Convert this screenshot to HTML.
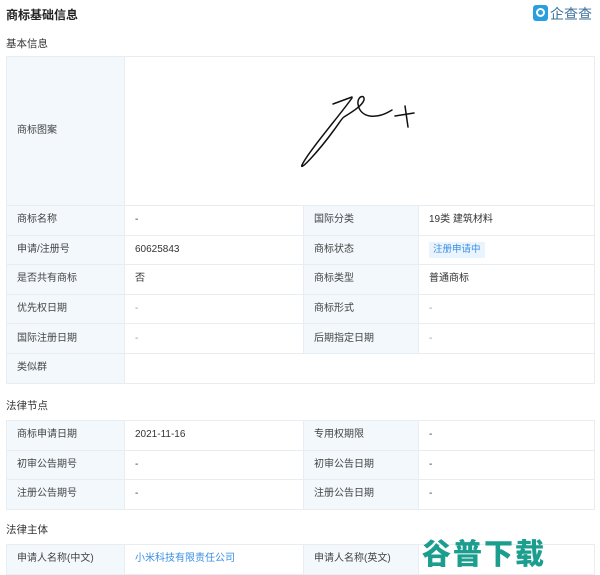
<!DOCTYPE html>
<html><head><meta charset="utf-8"><style>
*{margin:0;padding:0;box-sizing:border-box}
body{width:600px;height:571px;overflow:hidden;background:#fff;font-family:"Liberation Sans","Noto Sans CJK SC",sans-serif;font-size:10px;color:#333;position:relative}
.abs{position:absolute}
.title{left:6px;top:6px;font-size:12px;font-weight:bold;color:#222}
.sec{left:6px;font-size:10.5px;color:#333}
table{position:absolute;left:6px;width:589px;border-collapse:collapse;table-layout:fixed}
td{border:1px solid #e8edf2;padding:0 0 0 10px;height:29.6px;font-size:10px;line-height:12px;color:#333;white-space:nowrap;overflow:hidden;vertical-align:middle}
td.l{background:#f2f8fc;color:#444}
.tag{display:inline-block;background:#eaf4fc;color:#3a8ee6;padding:2px 4px;font-size:9.5px;line-height:12px}
.link{color:#3a8ee6}
.wm{left:422px;top:531px;font-size:29px;font-weight:900;color:#1b9e8d;letter-spacing:2px;font-family:"Noto Sans CJK SC",sans-serif}
</style></head><body>
<div class="abs title">商标基础信息</div>
<div class="abs" style="left:533px;top:5px;width:15px;height:16px;background:#2a9fe0;border-radius:3px"></div>
<div class="abs" style="left:536px;top:8px;width:9px;height:9px;border:2px solid #fff;border-radius:50%"></div>
<div class="abs" style="left:550px;top:4px;font-size:14px;color:#3d6f9a">企查查</div>
<div class="abs sec" style="top:36px">基本信息</div>
<table style="top:56px">
<colgroup><col style="width:118px"><col style="width:179px"><col style="width:115px"><col></colgroup>
<tr><td class="l" style="height:149px">商标图案</td><td colspan="3"></td></tr>
<tr><td class="l">商标名称</td><td>-</td><td class="l">国际分类</td><td>19类 建筑材料</td></tr>
<tr><td class="l">申请/注册号</td><td>60625843</td><td class="l">商标状态</td><td><span class="tag">注册申请中</span></td></tr>
<tr><td class="l">是否共有商标</td><td>否</td><td class="l">商标类型</td><td>普通商标</td></tr>
<tr><td class="l">优先权日期</td><td style="color:#999">-</td><td class="l">商标形式</td><td style="color:#999">-</td></tr>
<tr><td class="l">国际注册日期</td><td style="color:#999">-</td><td class="l">后期指定日期</td><td style="color:#999">-</td></tr>
<tr><td class="l">类似群</td><td colspan="3"></td></tr>
</table>
<svg class="abs" style="left:0;top:0" width="600" height="230"><path d="M333 104 L352 97 M352 98 C340 115 308 152 302 165 C299 172 318 152 334 130 C340 122 342 118 344 117 C352 112 362 106 364 100 C365 94 357 96 358 104 C360 118 376 120 392 110 M395 116 L414 113 M405 106 L408 127" fill="none" stroke="#111" stroke-width="1.5" stroke-linecap="round"/></svg>
<div class="abs sec" style="top:398px">法律节点</div>
<table style="top:420px">
<colgroup><col style="width:118px"><col style="width:179px"><col style="width:115px"><col></colgroup>
<tr><td class="l">商标申请日期</td><td>2021-11-16</td><td class="l">专用权期限</td><td>-</td></tr>
<tr><td class="l">初审公告期号</td><td>-</td><td class="l">初审公告日期</td><td>-</td></tr>
<tr><td class="l">注册公告期号</td><td>-</td><td class="l">注册公告日期</td><td>-</td></tr>
</table>
<div class="abs sec" style="top:522px">法律主体</div>
<table style="top:544px">
<colgroup><col style="width:118px"><col style="width:179px"><col style="width:115px"><col></colgroup>
<tr><td class="l">申请人名称(中文)</td><td class="link">小米科技有限责任公司</td><td class="l">申请人名称(英文)</td><td></td></tr>
</table>
<div class="abs wm">谷普下载</div>
</body></html>
